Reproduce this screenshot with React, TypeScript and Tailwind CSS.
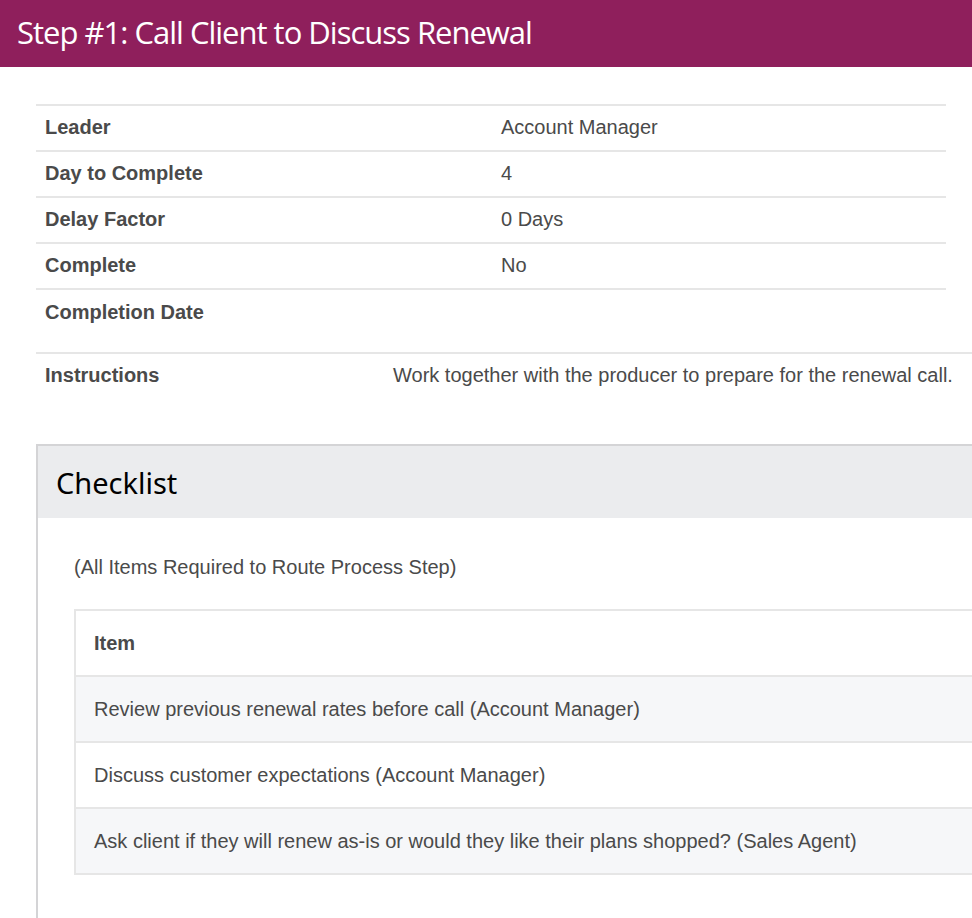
export default function App() {
  const details = [
    { label: "Leader", value: "Account Manager" },
    { label: "Day to Complete", value: "4" },
    { label: "Delay Factor", value: "0 Days" },
    { label: "Complete", value: "No" },
    { label: "Completion Date", value: "" },
  ];

  const items = [
    "Review previous renewal rates before call (Account Manager)",
    "Discuss customer expectations (Account Manager)",
    "Ask client if they will renew as-is or would they like their plans shopped? (Sales Agent)",
  ];

  return (
    <div className="w-full min-h-[918px] bg-white overflow-hidden font-['Liberation_Sans',Arial,sans-serif] text-[20px] text-[#4a4a4a]">
      <div className="h-[67px] bg-[#8f1f5c] flex items-center pl-[17px]">
        <h1 className="font-['Open_Sans',sans-serif] text-[31px] tracking-[-1px] text-white leading-none pb-[2px]">
          Step #1: Call Client to Discuss Renewal
        </h1>
      </div>

      <div className="pl-[36px] pt-[37px]">
        <table className="w-[910px] border-collapse table-fixed">
          <tbody>
            {details.map((d) => (
              <tr key={d.label} className="border-t-2 border-[#e6e6e6] h-[46px]">
                <td className="w-[456px] px-[9px] pb-[2px] font-bold">{d.label}</td>
                <td className="px-[9px] pb-[2px]">{d.value}</td>
              </tr>
            ))}
          </tbody>
        </table>

        <table className="w-[1000px] mt-[17px] border-collapse table-fixed">
          <tbody>
            <tr className="border-t-2 border-[#e6e6e6] h-[46px]">
              <td className="w-[348px] px-[9px] pb-[3px] font-bold">Instructions</td>
              <td className="px-[9px] pb-[3px] whitespace-nowrap">
                Work together with the producer to prepare for the renewal call.
              </td>
            </tr>
          </tbody>
        </table>

        <div className="mt-[45px] w-[1000px] border-l-2 border-t-2 border-[#d4d4d6] min-h-[480px]">
          <div className="h-[72px] bg-[#ebecee] flex items-center pl-[18px]">
            <h2 className="font-['Noto_Sans',sans-serif] text-[29px] text-black leading-none">Checklist</h2>
          </div>
          <div className="pl-[36px] pt-[39px]">
            <p className="leading-none">(All Items Required to Route Process Step)</p>
            <table className="mt-[32px] w-[960px] border-collapse border-2 border-[#e6e6e6]">
              <tbody>
                <tr className="h-[66px] bg-white">
                  <td className="px-[18px] font-bold">Item</td>
                </tr>
                {items.map((it, i) => (
                  <tr
                    key={it}
                    className={`h-[66px] border-t-2 border-[#e6e6e6] ${i % 2 === 0 ? "bg-[#f6f7f9]" : "bg-white"}`}
                  >
                    <td className="px-[18px]">{it}</td>
                  </tr>
                ))}
              </tbody>
            </table>
          </div>
        </div>
      </div>
    </div>
  );
}
